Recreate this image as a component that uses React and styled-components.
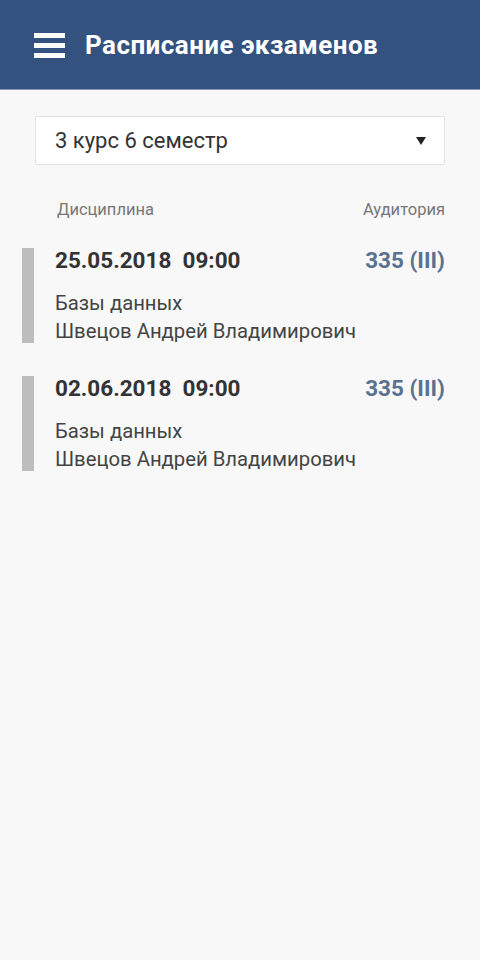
import React from 'react';
import styled, {createGlobalStyle} from 'styled-components';

const GlobalStyle = createGlobalStyle`
    html, body {
        margin: 0;
        padding: 0;
        background: #f8f8f8;
        font-family: Roboto, "Noto Sans", sans-serif;
    }
`;

const Page = styled.div`
    min-height: 960px;
    background: #f8f8f8;
`;

const Header = styled.header`
    height: 89px;
    display: flex;
    align-items: center;
    padding-left: 34px;
    background: #34527f;
    border-bottom: 1px solid #8797b5;
`;

const Burger = styled.div`
    width: 31px;
    display: flex;
    flex-direction: column;
    gap: 5px;
    margin-top: 1px;

    span {
        height: 5px;
        background: #fff;
    }
`;

const Title = styled.h1`
    margin: 0 0 0 20px;
    color: #fff;
    font-size: 26px;
    font-weight: 700;
    letter-spacing: 0.45px;
`;

const Content = styled.div`
    padding: 26px 35px 0 35px;
`;

const Select = styled.div`
    height: 47px;
    display: flex;
    align-items: center;
    justify-content: space-between;
    padding: 0 18px 0 19px;
    background: #fff;
    border: 1px solid #e2e2e2;
    border-radius: 2px;
    color: #333;
    font-size: 22px;
`;

const Arrow = styled.span`
    width: 0;
    height: 0;
    border-left: 5px solid transparent;
    border-right: 5px solid transparent;
    border-top: 8px solid #222;
`;

const Columns = styled.div`
    display: flex;
    justify-content: space-between;
    padding: 36px 0 0 22px;
    color: #777;
    font-size: 16.5px;
    line-height: 18px;
`;

const List = styled.div`
    padding: 29px 35px 0 22px;
    display: flex;
    flex-direction: column;
    gap: 33px;
`;

const Item = styled.div`
    display: flex;
    height: 95px;
`;

const Bar = styled.div`
    width: 12px;
    background: #bdbdbd;
    flex-shrink: 0;
`;

const Body = styled.div`
    flex: 1;
    padding-left: 21px;
`;

const Top = styled.div`
    display: flex;
    justify-content: space-between;
    font-size: 22.5px;
    font-weight: 700;
    line-height: 24px;
    margin-bottom: 17px;
`;

const Date = styled.span`
    color: #333;
    white-space: pre;
`;

const Room = styled.span`
    color: #5a7291;
`;

const Line = styled.div`
    color: #444;
    font-size: 20.3px;
    line-height: 28px;
    white-space: nowrap;
`;

const exams = [
    {date: '25.05.2018  09:00', room: '335 (III)', subject: 'Базы данных', teacher: 'Швецов Андрей Владимирович'},
    {date: '02.06.2018  09:00', room: '335 (III)', subject: 'Базы данных', teacher: 'Швецов Андрей Владимирович'},
];

export default function App() {
    return (
        <Page>
            <GlobalStyle/>
            <Header>
                <Burger><span/><span/><span/></Burger>
                <Title>Расписание экзаменов</Title>
            </Header>
            <Content>
                <Select>
                    <span>3 курс 6 семестр</span>
                    <Arrow/>
                </Select>
                <Columns>
                    <span>Дисциплина</span>
                    <span>Аудитория</span>
                </Columns>
            </Content>
            <List>
                {exams.map((e, i) => (
                    <Item key={i}>
                        <Bar/>
                        <Body>
                            <Top>
                                <Date>{e.date}</Date>
                                <Room>{e.room}</Room>
                            </Top>
                            <Line>{e.subject}</Line>
                            <Line>{e.teacher}</Line>
                        </Body>
                    </Item>
                ))}
            </List>
        </Page>
    );
}
